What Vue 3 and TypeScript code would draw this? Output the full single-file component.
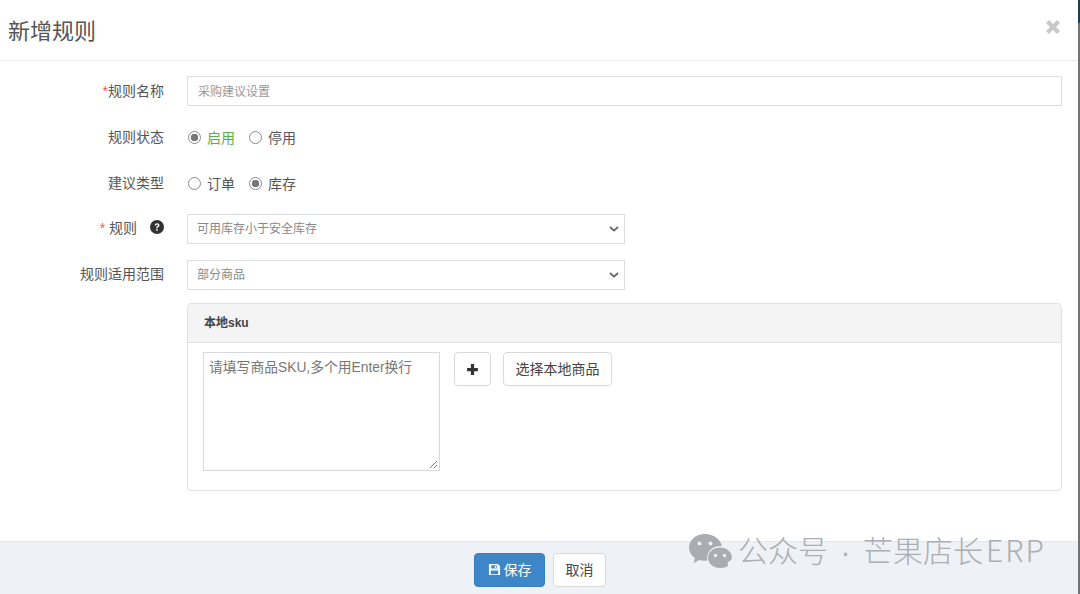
<script setup lang="ts">
const checked = { status: 'on', kind: 'stock' };
</script>

<template>
  <div class="page">
    <div class="modal">
      <header class="modal-head">
        <h4>新增规则</h4>
        <svg class="close" viewBox="0 0 16 16" width="16" height="16"><path d="M2.500 2.500l11 11M13.500 2.500l-11 11" stroke="#c8c8c8" stroke-width="4.200" fill="none" /></svg>
      </header>

      <main class="modal-body">
        <div class="row">
          <label class="label"><i class="req">*</i>规则名称</label>
          <div class="fake-input wide"><span class="ph">采购建议设置</span></div>
        </div>

        <div class="row radio-row first-radio">
          <label class="label">规则状态</label>
          <div class="radios">
            <span class="radio" :class="{ on: checked.status === 'on' }"></span>
            <span class="green">启用</span>
            <span class="radio" :class="{ on: checked.status === 'off' }"></span>
            <span>停用</span>
          </div>
        </div>

        <div class="row radio-row second-radio">
          <label class="label">建议类型</label>
          <div class="radios">
            <span class="radio" :class="{ on: checked.kind === 'order' }"></span>
            <span>订单</span>
            <span class="radio" :class="{ on: checked.kind === 'stock' }"></span>
            <span>库存</span>
          </div>
        </div>

        <div class="row rule-row">
          <label class="label tall">
            <i class="req spaced">*</i>规则
            <svg class="help" viewBox="0 0 14 14" width="14" height="14">
              <circle cx="7" cy="7" r="7" fill="#333" />
              <path d="M4.700 5.400C4.800 4 5.800 3.200 7.100 3.200c1.400 0 2.400.8 2.400 2 0 .9-.5 1.400-1.200 1.800-.5.3-.7.5-.7 1v.3H6.200v-.5c0-.8.3-1.200 1-1.600.5-.3.8-.5.8-.9s-.4-.7-.9-.7c-.6 0-1 .3-1.100 1z" fill="#fff" />
              <rect x="6.200" y="9" width="1.500" height="1.600" fill="#fff" />
            </svg>
          </label>
          <div class="fake-input select">
            <span class="val">可用库存小于安全库存</span>
            <svg class="chev" viewBox="0 0 10 6" width="10" height="6"><path d="M1 1l4 3.600L9 1" fill="none" stroke="#666" stroke-width="1.800" /></svg>
          </div>
        </div>

        <div class="row scope-row">
          <label class="label tall">规则适用范围</label>
          <div class="fake-input select">
            <span class="val">部分商品</span>
            <svg class="chev" viewBox="0 0 10 6" width="10" height="6"><path d="M1 1l4 3.600L9 1" fill="none" stroke="#666" stroke-width="1.800" /></svg>
          </div>
        </div>

        <section class="panel">
          <div class="panel-head">本地sku</div>
          <div class="panel-body">
            <div class="area">
              <span>请填写商品SKU,多个用Enter换行</span>
              <svg class="grip" viewBox="0 0 9 9" width="9" height="9"><path d="M1 8l7-7M5 8l3-3" stroke="#777" stroke-width="1" fill="none" /></svg>
            </div>
            <button class="btn plus" type="button">
              <svg viewBox="0 0 12 12" width="13" height="13"><path d="M4.500 1h3v3.500H11v3H7.500V11h-3V7.500H1v-3h3.500z" fill="#333" /></svg>
            </button>
            <button class="btn pick" type="button">选择本地商品</button>
          </div>
        </section>
      </main>

      <footer class="modal-foot">
        <button class="btn save" type="button">
          <svg viewBox="0 0 14 14" width="13" height="13">
            <path fill-rule="evenodd" d="M1.500 1H10.500L13 3.500V13H1V1.500zM3.500 2.500V6H9.500V2.500zM3 8V12H11V8z" fill="#fff" />
            <rect x="7.300" y="3" width="1.400" height="2.400" fill="#fff" />
          </svg>
          保存
        </button>
        <button class="btn cancel" type="button">取消</button>
      </footer>

      <div class="watermark">
        <svg viewBox="0 0 44 36" width="44" height="36">
          <path d="M17 1C8 1 1 7 1 14.500c0 4.300 2.300 8 6 10.500l-1.500 5 5.800-3c1.800.5 3.700.8 5.700.8 1 0 1.500-.1 2.300-.2C18 19 24 13 33 13c.3 0 .6 0 .9.100C32.500 6.200 25.500 1 17 1z" fill="#a9acb0" />
          <circle cx="11.500" cy="10.500" r="2" fill="#eef1f6" />
          <circle cx="22.500" cy="10.500" r="2" fill="#eef1f6" />
          <path d="M32 14.500c-6.600 0-12 4.600-12 10.200S25.400 35 32 35c1.400 0 2.800-.2 4-.6l0 .6 4-2-.3-3.500C42 27.700 44 26.200 44 24.700 44 19.100 38.600 14.500 32 14.500z" fill="#a9acb0" />
          <circle cx="27.500" cy="22.500" r="1.700" fill="#eef1f6" />
          <circle cx="36.500" cy="22.500" r="1.700" fill="#eef1f6" />
        </svg>
        <span>公众号<span class="dot">·</span>芒果店长<span class="latin">ERP</span></span>
      </div>
    </div>
    <div class="edge"><span class="edge-top"></span></div>
  </div>
</template>

<style scoped>
.page {
  display: flex;
  width: 1080px;
  height: 594px;
  overflow: hidden;
  font-family: "Liberation Sans", "Noto Sans CJK SC", sans-serif;
  font-size: 14px;
  color: #555;
}
.modal {
  position: relative;
  flex: 1;
  display: flex;
  flex-direction: column;
  background: #fff;
}
.edge {
  width: 2px;
  background: #6f7375;
}
.edge-top {
  display: block;
  height: 23px;
  background: #1f3f52;
}
.modal-head {
  height: 60px;
  flex: none;
  display: flex;
  align-items: center;
  justify-content: space-between;
  padding: 0 17px 0 8px;
  border-bottom: 1px solid #e9ebee;
  box-sizing: content-box;
}
.modal-head h4 {
  margin: 0 0 2px;
  font-size: 22px;
  font-weight: 400;
  color: #555;
}
.close {
  margin: 0 0 6px;
}
.modal-body {
  flex: 1;
  padding: 15px 16px 0 0;
}
.row {
  display: flex;
  align-items: center;
}
.label {
  width: 164px;
  margin-right: 23px;
  padding-bottom: 2px;
  text-align: right;
  flex: none;
}
.label.tall {
  padding-bottom: 5px;
}
.req {
  font-style: normal;
  color: #e5604d;
}
.req.spaced {
  margin-right: 4px;
}
.help {
  margin-left: 9px;
  vertical-align: -1px;
}
.fake-input {
  height: 30px;
  box-sizing: border-box;
  border: 1px solid #dcdee0;
  display: flex;
  align-items: center;
  background: #fff;
  font-size: 12px;
}
.fake-input span {
  padding-bottom: 2px;
}
.fake-input.select span {
  padding-bottom: 4px;
}
.wide {
  flex: 1;
  padding-left: 10px;
}
.ph {
  color: #999;
}
.select {
  width: 438px;
  justify-content: space-between;
  padding: 0 4px 0 9px;
  color: #888;
}
.chev {
  margin-right: 1px;
}
.radio-row {
  height: 20px;
}
.first-radio {
  margin-top: 21px;
}
.second-radio {
  margin-top: 26px;
}
.radios {
  display: flex;
  align-items: center;
  padding-left: 1px;
}
.radio {
  width: 13px;
  height: 13px;
  box-sizing: border-box;
  border: 1px solid #8a8a8a;
  border-radius: 50%;
  margin-right: 6px;
  background: #fff;
}
.radio.on {
  background: radial-gradient(circle, #777 0 3.500px, #fff 4px);
}
.radios span:nth-child(2) {
  margin-right: 14px;
}
.green {
  color: #5cad4a;
}
.rule-row {
  margin-top: 21px;
}
.scope-row {
  margin-top: 16px;
}
.panel {
  margin: 13px 0 0 187px;
  height: 188px;
  box-sizing: border-box;
  border: 1px solid #dfe1e3;
  border-radius: 4px;
  display: flex;
  flex-direction: column;
}
.panel-head {
  height: 39px;
  flex: none;
  box-sizing: border-box;
  padding: 9px 16px 0;
  background: #f4f4f4;
  border-bottom: 1px solid #e3e3e3;
  font-size: 12px;
  font-weight: 700;
  color: #444;
  border-radius: 3px 3px 0 0;
}
.panel-body {
  display: flex;
  align-items: flex-start;
  padding: 9px 15px;
}
.area {
  position: relative;
  width: 237px;
  height: 119px;
  box-sizing: border-box;
  border: 1px solid #d8dadc;
  padding: 6px 5px;
  color: #777;
  font-size: 13.800px;
  line-height: 18px;
}
.grip {
  position: absolute;
  right: 1px;
  bottom: 1px;
}
.btn {
  font: inherit;
  height: 34px;
  box-sizing: border-box;
  border: 1px solid #d9d9d9;
  border-radius: 4px;
  background: #fff;
  color: #444;
  padding: 0 0 2px;
  display: inline-flex;
  align-items: center;
  justify-content: center;
}
.plus {
  width: 37px;
  margin-left: 14px;
  padding: 0;
}
.pick {
  width: 109px;
  margin-left: 12px;
}
.modal-foot {
  height: 53px;
  flex: none;
  box-sizing: border-box;
  border-top: 1px solid #e3e6ea;
  background: #eef1f6;
  display: flex;
  align-items: flex-start;
  padding: 11px 0 0 474px;
  gap: 8px;
}
.save {
  width: 71px;
  background: #3d87c9;
  border-color: #3a80c0;
  color: #fff;
  gap: 3px;
}
.cancel {
  width: 53px;
}
.watermark {
  position: absolute;
  left: 688px;
  top: 531px;
  display: flex;
  align-items: center;
  gap: 6px;
  color: #abaeb2;
  font-size: 30px;
  font-family: "Noto Sans CJK SC", sans-serif;
  font-weight: 300;
  line-height: 36px;
  white-space: nowrap;
}
.dot {
  display: inline-block;
  width: 35px;
  text-align: center;
  font-family: "Liberation Sans", sans-serif;
}
.latin {
  margin-left: 3px;
  letter-spacing: 2px;
}
</style>
